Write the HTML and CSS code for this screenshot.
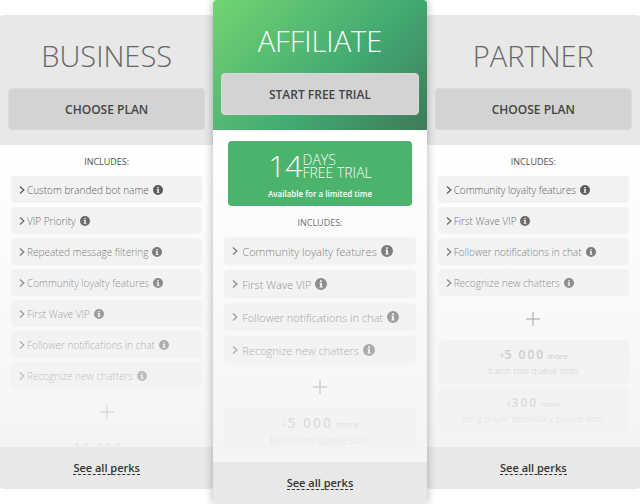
FILE: index.html
```
<!DOCTYPE html>
<html lang="en">
<head>
    <meta charset="UTF-8">
    <meta name="viewport" content="width=device-width, initial-scale=1.0">
    <title>Plans</title>
    <link rel="stylesheet" href="styles.css">
</head>
<body>
    <svg class="sprite" aria-hidden="true">
        <symbol id="arrow" viewBox="0 0 6 10">
            <path d="M1 1.5 4.8 5 1 8.5" fill="none" stroke="currentColor" stroke-width="1.3"/>
        </symbol>
        <symbol id="info" viewBox="0 0 16 16">
            <path fill="currentColor" fill-rule="evenodd" d="M8 0a8 8 0 1 1 0 16A8 8 0 0 1 8 0zM6.8 3v2.3h2.4V3zM5.8 6.4v1.2h1v3.6h-1v1.3h4.5v-1.3h-1V6.4z"/>
        </symbol>
        <symbol id="plus" viewBox="0 0 14 14">
            <path d="M7 0v14M0 7h14" stroke="currentColor" stroke-width="1"/>
        </symbol>
    </svg>

    <main class="plans">
        <section class="plan">
            <header class="plan-header">
                <h2>BUSINESS</h2>
                <button type="button">CHOOSE PLAN</button>
            </header>
            <div class="plan-body">
                <h3>INCLUDES:</h3>
                <ul class="features">
                    <li><svg class="arrow"><use href="#arrow"/></svg>Custom branded bot name<svg class="info"><use href="#info"/></svg></li>
                    <li><svg class="arrow"><use href="#arrow"/></svg>VIP Priority<svg class="info"><use href="#info"/></svg></li>
                    <li><svg class="arrow"><use href="#arrow"/></svg>Repeated message filtering<svg class="info"><use href="#info"/></svg></li>
                    <li><svg class="arrow"><use href="#arrow"/></svg>Community loyalty features<svg class="info"><use href="#info"/></svg></li>
                    <li><svg class="arrow"><use href="#arrow"/></svg>First Wave VIP<svg class="info"><use href="#info"/></svg></li>
                    <li><svg class="arrow"><use href="#arrow"/></svg>Follower notifications in chat<svg class="info"><use href="#info"/></svg></li>
                    <li><svg class="arrow"><use href="#arrow"/></svg>Recognize new chatters<svg class="info"><use href="#info"/></svg></li>
                </ul>
                <svg class="plus"><use href="#plus"/></svg>
                <ul class="extras">
                    <li><div>+<strong>10 000</strong> <small>more</small></div></li>
                </ul>
            </div>
            <footer class="plan-footer"><a href="#">See all perks</a></footer>
        </section>

        <section class="plan featured">
            <header class="plan-header">
                <h2>AFFILIATE</h2>
                <button type="button">START FREE TRIAL</button>
            </header>
            <div class="plan-body">
                <div class="trial">
                    <div class="trial-length">
                        <span class="trial-number">14</span>
                        <span class="trial-text">DAYS<br>FREE TRIAL</span>
                    </div>
                    <p>Available for a limited time</p>
                </div>
                <h3>INCLUDES:</h3>
                <ul class="features">
                    <li><svg class="arrow"><use href="#arrow"/></svg>Community loyalty features<svg class="info"><use href="#info"/></svg></li>
                    <li><svg class="arrow"><use href="#arrow"/></svg>First Wave VIP<svg class="info"><use href="#info"/></svg></li>
                    <li><svg class="arrow"><use href="#arrow"/></svg>Follower notifications in chat<svg class="info"><use href="#info"/></svg></li>
                    <li><svg class="arrow"><use href="#arrow"/></svg>Recognize new chatters<svg class="info"><use href="#info"/></svg></li>
                </ul>
                <svg class="plus"><use href="#plus"/></svg>
                <ul class="extras">
                    <li><div>+<strong>5 000</strong> <small>more</small></div><p>batch tool queue slots</p></li>
                </ul>
            </div>
            <footer class="plan-footer"><a href="#">See all perks</a></footer>
        </section>

        <section class="plan">
            <header class="plan-header">
                <h2>PARTNER</h2>
                <button type="button">CHOOSE PLAN</button>
            </header>
            <div class="plan-body">
                <h3>INCLUDES:</h3>
                <ul class="features">
                    <li><svg class="arrow"><use href="#arrow"/></svg>Community loyalty features<svg class="info"><use href="#info"/></svg></li>
                    <li><svg class="arrow"><use href="#arrow"/></svg>First Wave VIP<svg class="info"><use href="#info"/></svg></li>
                    <li><svg class="arrow"><use href="#arrow"/></svg>Follower notifications in chat<svg class="info"><use href="#info"/></svg></li>
                    <li><svg class="arrow"><use href="#arrow"/></svg>Recognize new chatters<svg class="info"><use href="#info"/></svg></li>
                </ul>
                <svg class="plus"><use href="#plus"/></svg>
                <ul class="extras">
                    <li><div>+<strong>5 000</strong> <small>more</small></div><p>batch tool queue slots</p></li>
                    <li><div>+<strong>300</strong> <small>more</small></div><p>song player secondary playlist slots</p></li>
                </ul>
            </div>
            <footer class="plan-footer"><a href="#">See all perks</a></footer>
        </section>
    </main>
</body>
</html>
```
FILE: styles.css
```
* {
    margin: 0;
    padding: 0;
    box-sizing: border-box;
}

body {
    background: #fff;
    color: #444;
    font-family: "Open Sans", sans-serif;
    font-size: 10px;
}

ul {
    list-style: none;
}

.sprite {
    display: none;
}

.plans {
    display: grid;
    grid-template-columns: repeat(3, 1fr);
    min-height: 100vh;
}

.plan {
    display: flex;
    flex-direction: column;
    margin: 15px 0;
    border-radius: 4px;
    overflow: hidden;
}

.plan.featured {
    margin: 0;
    z-index: 1;
    box-shadow: 0 0 10px rgba(0, 0, 0, .3);
}

.plan-header {
    display: flex;
    flex-direction: column;
    gap: 12px;
    padding: 20px 8px 15px;
    background: #e8e8e8;
    text-align: center;
}

.featured .plan-header {
    background: linear-gradient(135deg, #72d572 0%, #42a872 60%, #3f7a57 100%);
}

.plan-header h2 {
    color: #666;
    font-size: 29px;
    font-weight: 300;
    line-height: 41px;
}

.featured .plan-header h2 {
    color: #fff;
}

.plan-header button {
    height: 42px;
    border: 1px solid #dadada;
    border-radius: 4px;
    background: #d3d3d3;
    color: #444;
    font-family: inherit;
    font-size: 12px;
    font-weight: 600;
    cursor: pointer;
}

.plan-body {
    flex: 1 1 0;
    position: relative;
    padding: 10px 11px 0;
    overflow: hidden;
    text-align: center;
}

/* fades the perks out towards the footer */
.plan-body::after {
    content: "";
    position: absolute;
    inset: 0;
    background: linear-gradient(rgba(243, 243, 243, 0), rgba(243, 243, 243, .9));
    pointer-events: none;
}

.plan-body h3 {
    margin-bottom: 7px;
    font-size: 9px;
    font-weight: 400;
    line-height: 14px;
}

.features {
    display: flex;
    flex-direction: column;
    gap: 4px;
}

.features li {
    display: flex;
    align-items: center;
    height: 27px;
    padding: 0 8px;
    border-radius: 4px;
    background: #f2f2f2;
    font-size: 10px;
    font-weight: 300;
}

.featured .features {
    gap: 5px;
}

.featured .features li {
    height: 28px;
    font-size: 11px;
}

.arrow {
    width: 6px;
    height: 10px;
    margin-right: 2px;
}

.featured .arrow {
    margin-right: 4px;
}

.info {
    width: 10px;
    height: 10px;
    margin-left: 4px;
}

.featured .info {
    width: 12px;
    height: 12px;
}

.plus {
    display: block;
    width: 14px;
    height: 14px;
    margin: 16px auto 14px;
}

.extras {
    display: flex;
    flex-direction: column;
    gap: 4px;
}

.extras li {
    padding: 7px 0 6px;
    border-radius: 4px;
    background: #f2f2f2;
    color: #888;
    line-height: 16px;
}

.extras strong {
    font-size: 12px;
    font-weight: 600;
    letter-spacing: 2px;
}

.extras small {
    font-size: 8px;
}

.extras p {
    font-size: 9px;
    font-weight: 300;
    line-height: 14px;
}

.featured .extras strong {
    font-size: 14px;
}

.featured .extras small {
    font-size: 9px;
}

.featured .extras p {
    font-size: 10px;
}

.trial {
    position: relative;
    z-index: 1;
    margin: 1px 4px 10px;
    padding: 9px 0 5px;
    border-radius: 4px;
    background: #4bb36b;
    color: #fff;
}

.trial-length {
    display: flex;
    align-items: center;
    justify-content: center;
    margin-bottom: 5px;
    font-weight: 300;
}

.trial-number {
    font-size: 30px;
    line-height: 32px;
}

.trial-text {
    font-size: 14px;
    line-height: 13px;
    text-align: left;
}

.trial p {
    font-size: 8px;
    font-weight: 600;
    line-height: 14px;
}

.plan-footer {
    padding: 14px 0;
    background: #e8e8e8;
    line-height: 14px;
    text-align: center;
}

.plan-footer a {
    display: inline-block;
    border-bottom: 1px dashed #333;
    color: #333;
    font-size: 11px;
    font-weight: 600;
    line-height: 13px;
    text-decoration: none;
}
```
